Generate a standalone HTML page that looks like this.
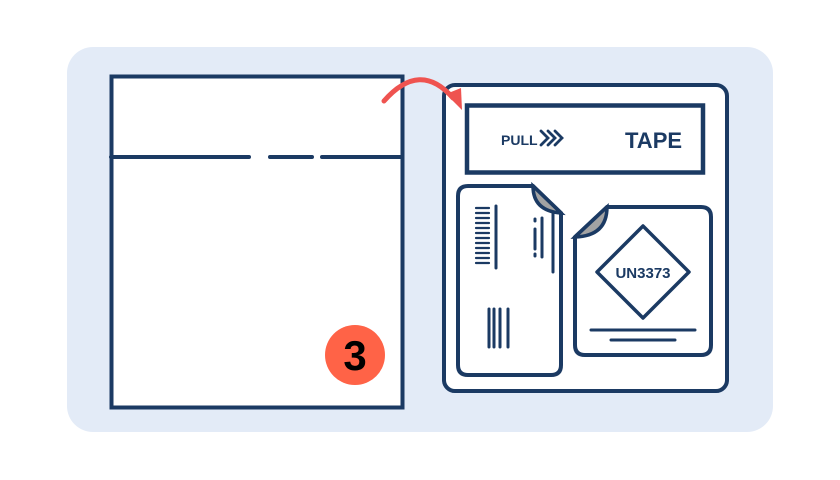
<!DOCTYPE html>
<html><head><meta charset="utf-8"><style>
html,body{margin:0;padding:0;background:#fff;}
svg{display:block;}
text{font-family:"Liberation Sans",sans-serif;font-weight:bold;fill:#1b3a63;}
</style></head><body>
<svg width="840" height="480" viewBox="0 0 840 480" xmlns="http://www.w3.org/2000/svg">
<rect x="67" y="47" width="706" height="385" rx="26" fill="#e3ebf7"/>
<g stroke="#1b3a63" fill="none" stroke-linecap="round">
<rect x="111.5" y="76.5" width="291" height="331" fill="#fff" stroke-width="4" stroke-linecap="butt"/>
<path d="M111 157H249M270 157H312M322 157H402" stroke-width="4"/>
<rect x="444" y="85" width="283" height="306" rx="11" fill="#fff" stroke-width="4"/>
<rect x="467" y="105.5" width="236" height="67" stroke-width="4.5" stroke-linecap="butt"/>
<path d="M541 131l7 7-7 7M548 131l7 7-7 7M555 131l7 7-7 7" stroke-width="2.8"/>
<path d="M468 186H533L561 213V365Q561 375 551 375H468Q458 375 458 365V196Q458 186 468 186Z" fill="#fff" stroke-width="4"/>
<path d="M533 186Q533 211 561 213Z" fill="#a3a3a3" stroke-width="3.5"/>
<path d="M476 208H489M476 213H489M476 218H489M476 223H489M476 228H489M476 233H489M476 238H489M476 243H489M476 248H489M476 253H489M476 258H489M476 263H489" stroke-width="2.2"/>
<path d="M496 206V268M542 218V257M553 213V272" stroke-width="3"/>
<path d="M535 219v2M535 229v20M535 254v2" stroke-width="3"/>
<path d="M489 309V347M494 309V347M500 309V347M508 309V347" stroke-width="3"/>
<path d="M607 207H701Q711 207 711 217V345Q711 355 701 355H585Q575 355 575 345V237Z" fill="#fff" stroke-width="4"/>
<path d="M607 207Q607 236 575 237Z" fill="#a3a3a3" stroke-width="3.5"/>
<path d="M643 226L689 272L643 318L597 272Z" stroke-width="3.5" stroke-linejoin="round"/>
<path d="M591 330H695M611 340H675" stroke-width="3"/>
</g>
<text x="501" y="145" font-size="14">PULL</text>
<text x="625" y="148" font-size="22">TAPE</text>
<text x="643" y="278" font-size="15" text-anchor="middle">UN3373</text>
<path d="M384 101Q420 60 453 98" stroke="#ef5350" stroke-width="5" fill="none" stroke-linecap="round"/>
<path d="M446 94L462 110L461 88Z" fill="#ef5350"/>
<circle cx="355" cy="355" r="30" fill="#ff6347"/>
<text x="355" y="370" font-size="42" text-anchor="middle" style="fill:#000">3</text>
</svg>
</body></html>
